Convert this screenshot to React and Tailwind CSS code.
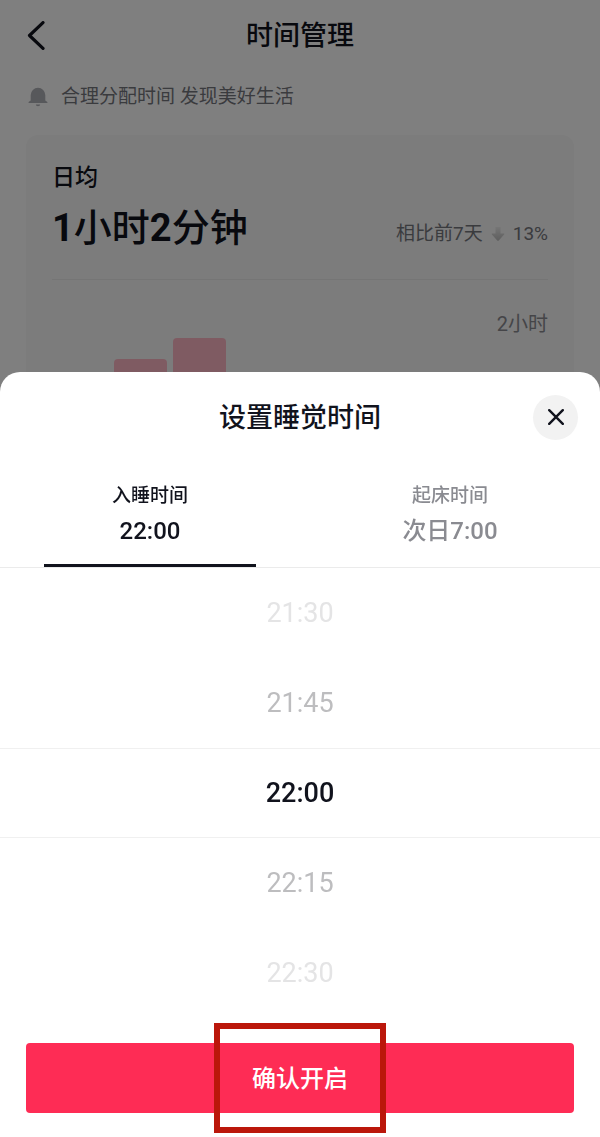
import { useState } from 'react'

const bars = [
    { day: '周一', height: 84 },
    { day: '周二', height: 141 },
    { day: '周三', height: 162 },
    { day: '周四', height: 96 },
    { day: '周五', height: 70 },
    { day: '周六', height: 104 },
    { day: '周日', height: 88 },
]

const tabs = [
    { id: 'sleep', label: '入睡时间', value: '22:00' },
    { id: 'wake', label: '起床时间', value: '次日7:00' },
]

const times = ['21:30', '21:45', '22:00', '22:15', '22:30']

// fades out with the distance from the selected row
const shades = [
    'font-medium text-[#11131d] border-y border-[#f0f0f0]',
    'text-[#bdbdbf]',
    'text-[#e4e4e5]',
]

function BellIcon() {
    return (
        <svg viewBox="0 0 20 20" className="size-5 text-[#afb0b6]" fill="currentColor" aria-hidden="true">
            <path d="M10 .8a7.300 7.300 0 0 0-7.300 7.300v5.400L.6 15v1h18.800v-1l-2.100-1.500V8.100A7.300 7.300 0 0 0 10 .8z" />
            <path d="M7.800 17.600h4.400a2.200 1.700 0 0 1-4.400 0z" />
        </svg>
    )
}

function DownIcon() {
    return (
        <svg viewBox="0 0 14 16" className="h-4 w-3.5" aria-hidden="true">
            <defs>
                <linearGradient id="down" x1="0" y1="0" x2="0" y2="1">
                    <stop offset="0" stopColor="#ececec" />
                    <stop offset="1" stopColor="#bcbcbc" />
                </linearGradient>
            </defs>
            <path d="M4.500 1h5v6.500h3.200q1.300 0 .4 1L8 14.300q-1 1-2 0L.9 8.500q-.9-1 .4-1h3.200z" fill="url(#down)" />
        </svg>
    )
}

export default function App() {
    const [open, setOpen] = useState(true)
    const [tab, setTab] = useState('sleep')
    const [selected, setSelected] = useState(2)

    return (
        <main className="min-h-screen bg-white text-[#11131d] font-[Roboto,'Noto_Sans_CJK_SC',sans-serif]">

            {/* Header */}
            <header className="grid grid-cols-[48px_1fr_48px] items-center px-3 h-[72px]">
                <button aria-label="返回" className="flex items-center justify-center h-12">
                    <svg viewBox="0 0 18 30" className="h-[30px] w-[18px]" fill="none" stroke="currentColor" strokeWidth="3.2" strokeLinecap="round" strokeLinejoin="round">
                        <path d="M16 1.600 2.500 14.500 16 27.400" />
                    </svg>
                </button>
                <h1 className="text-center text-[27px] leading-10 font-medium">时间管理</h1>
            </header>

            <div className="flex items-center gap-[13px] px-7 pt-[11px] text-[19px] leading-7 text-[#75767d]">
                <BellIcon />
                <p>合理分配时间 发现美好生活</p>
            </div>

            {/* Daily average */}
            <section className="mx-[26px] mt-6 px-[26px] pt-[25px] pb-8 rounded-xl bg-[#f8f8f8]">
                <h2 className="text-[23px] leading-9 font-medium">日均</h2>
                <div className="flex items-center justify-between h-16">
                    <p className="text-[38px] leading-[64px] font-medium">
                        <b className="font-bold">1</b>小时<b className="font-bold">2</b>分钟
                    </p>
                    <p className="flex items-center gap-2 pt-3 text-[19px] leading-7 text-[#75767d]">
                        相比前7天 <DownIcon /> <span>13%</span>
                    </p>
                </div>
                <div className="mt-[19px] border-t border-[#ebebeb]" />

                <div className="mt-[30px] flex justify-end text-xl leading-7 text-[#8a8b91]">2小时</div>
                <div className="flex items-end gap-[6px] h-[162px] pl-[3px]">
                    {bars.map(b => (
                        <div key={b.day} title={b.day} className="w-[53px] rounded-t-sm bg-[#ffb7c5]" style={{ height: b.height }} />
                    ))}
                </div>
            </section>

            {open && (
                <div className="fixed inset-0 z-10 flex flex-col justify-end bg-black/50">
                    <div role="dialog" aria-labelledby="sheet-title" className="bg-white rounded-t-[20px] pb-6">

                        {/* Sheet title */}
                        <div className="grid grid-cols-[45px_1fr_45px] items-center px-[22px] h-[90px]">
                            <h2 id="sheet-title" className="col-start-2 pt-0.5 text-center text-[27px] leading-10 font-medium">设置睡觉时间</h2>
                            <button onClick={() => setOpen(false)} aria-label="关闭" className="flex items-center justify-center size-[45px] rounded-full bg-[#f2f2f2]">
                                <svg viewBox="0 0 16 16" className="size-4" fill="none" stroke="currentColor" strokeWidth="2.4" strokeLinecap="round">
                                    <path d="M1.200 1.200 14.800 14.800M14.800 1.200 1.200 14.800" />
                                </svg>
                            </button>
                        </div>

                        <div role="tablist" className="grid grid-cols-2 border-b border-[#ebebeb]">
                            {tabs.map(t => (
                                <button
                                    key={t.id}
                                    role="tab"
                                    aria-selected={tab === t.id}
                                    onClick={() => setTab(t.id)}
                                    className={`flex flex-col items-center pt-5 px-11 font-medium ${tab === t.id ? 'text-[#11131d]' : 'text-[#8a8b91]'}`}
                                >
                                    <span className="text-[19px] leading-7">{t.label}</span>
                                    <span className="mt-[3px] text-2xl leading-9">{t.value}</span>
                                    <span className={`mt-[15px] h-[3px] w-full ${tab === t.id ? 'bg-[#11131d]' : 'bg-transparent'}`} />
                                </button>
                            ))}
                        </div>

                        {/* Time wheel */}
                        <div role="listbox" aria-label="时间" className="flex flex-col">
                            {times.map((time, i) => (
                                <button
                                    key={time}
                                    role="option"
                                    aria-selected={i === selected}
                                    onClick={() => setSelected(i)}
                                    className={`h-[90px] text-[27px] leading-10 ${shades[Math.min(Math.abs(i - selected), 2)]}`}
                                >
                                    {time}
                                </button>
                            ))}
                        </div>

                        <div className="relative mx-[26px] mt-[25px]">
                            <button onClick={() => setOpen(false)} className="block w-full h-[70px] pt-0.5 rounded bg-[#fe2c55] text-white text-2xl font-medium">
                                确认开启
                            </button>
                            <span className="pointer-events-none absolute -inset-y-5 left-1/2 w-[172px] -translate-x-1/2 border-6 border-[#bb170b]" />
                        </div>
                    </div>
                </div>
            )}
        </main>
    )
}
